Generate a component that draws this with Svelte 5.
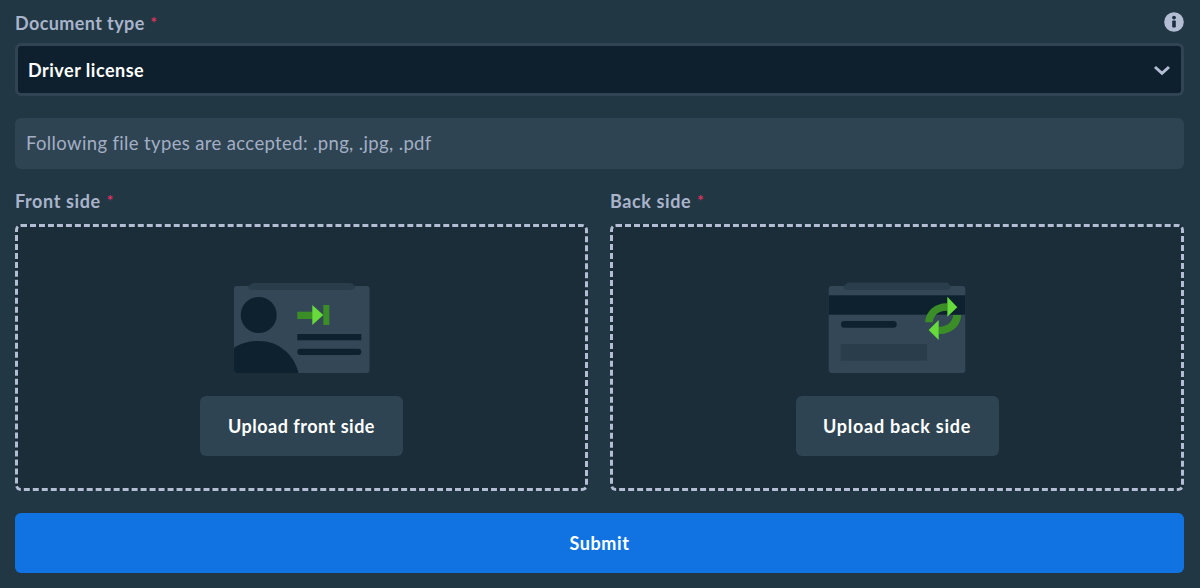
<script>
  const sides = [
    { label: 'Front side', action: 'Upload front side', kind: 'front' },
    { label: 'Back side', action: 'Upload back side', kind: 'back' }
  ];
</script>

<div class="page">
  <div class="label-row">
    <span class="label">Document type <span class="req">*</span></span>
    <svg class="info" width="20" height="20" viewBox="0 0 20 20" aria-hidden="true">
      <circle cx="10" cy="10" r="9.8" fill="#b3bdd3" />
      <circle cx="10" cy="5.6" r="1.9" fill="#1c2f3e" />
      <rect x="8.2" y="8.6" width="3.6" height="7" rx="0.8" fill="#1c2f3e" />
    </svg>
  </div>

  <div class="select">
    <span>Driver license</span>
    <svg width="18" height="12" viewBox="0 0 18 12" aria-hidden="true">
      <path d="M2 3 L9 9.3 L16 3" fill="none" stroke="#b3bdd3" stroke-width="3" />
    </svg>
  </div>

  <div class="note">Following file types are accepted: .png, .jpg, .pdf</div>

  <div class="sides">
    {#each sides as s}
      <div class="side">
        <span class="label side-label">{s.label} <span class="req">*</span></span>
        <div class="drop">
          {#if s.kind === 'front'}
            <svg class="card" width="139" height="94" viewBox="232 281 139 94" aria-hidden="true">
              <path d="M234 289 Q234 286 237 286 H366.5 Q369.5 286 369.5 289 V370 Q369.5 373 366.5 373 H237 Q234 373 234 370 Z" fill="#334756" />
              <path d="M248 288 Q250 283 255 283 H349 Q354 283 355 288 Q353 290 350 290 H253 Q250 290 248 288 Z" fill="#2a3d4b" />
              <circle cx="258.7" cy="315" r="18" fill="#0e212e" />
              <path d="M234 348 C241 343 250 341 258.7 341 C278 341 294 354 298.5 373 H237 Q234 373 234 370 Z" fill="#0e212e" />
              <rect x="297.3" y="311.7" width="15.5" height="7.3" fill="#3b8e27" />
              <path d="M312.3 305 L323.3 315 L312.3 325 Z" fill="#67db3b" />
              <rect x="323.3" y="305" width="6" height="20" fill="#3b8e27" />
              <rect x="297.3" y="334" width="64" height="6.3" fill="#0e212e" />
              <rect x="297.3" y="348.7" width="64" height="6.3" rx="3" fill="#0e212e" />
            </svg>
          {:else}
            <svg class="card" width="139" height="94" viewBox="828 281 139 94" aria-hidden="true">
              <path d="M828.7 289 Q828.7 286 831.7 286 H962.3 Q965.3 286 965.3 289 V370 Q965.3 373 962.3 373 H831.7 Q828.7 373 828.7 370 Z" fill="#334756" />
              <path d="M843.3 288 Q845 282.5 850 282.5 H945 Q950 282.5 950.7 288 Q949 290 946 290 H848 Q845 290 843.3 288 Z" fill="#2a3d4b" />
              <rect x="828.7" y="295.3" width="136.6" height="19.4" fill="#0e212e" />
              <rect x="841" y="321" width="55.7" height="6.7" rx="3.3" fill="#0e212e" />
              <rect x="840.7" y="344" width="86.3" height="16.7" fill="#2a3d4b" />
              <path d="M925 322.3 C926 311 935 303 947.3 303.3 V310.7 C939 310.5 933.5 315 932.7 322.3 Z" fill="#3b8e27" />
              <path d="M961 315 C961 326 951 334.5 938.7 334 V326.7 C947 327 952.5 322 953.3 315 Z" fill="#3b8e27" />
              <path d="M947.3 296.7 L957.3 307.3 L947.3 316.7 Z" fill="#67db3b" />
              <path d="M938.7 320 L928.7 330 L938.7 340 Z" fill="#67db3b" />
            </svg>
          {/if}
          <button type="button" class="upload {s.kind}">{s.action}</button>
        </div>
      </div>
    {/each}
  </div>

  <button type="button" class="submit">Submit</button>
</div>

<style>
  :global(body) {
    margin: 0;
    background: #213744;
  }
  .page {
    width: 1200px;
    height: 588px;
    box-sizing: border-box;
    padding: 10px 16px 0 15px;
    background: #213744;
    font-family: Lato, "Liberation Sans", sans-serif;
    overflow: hidden;
  }
  .label-row {
    display: flex;
    justify-content: space-between;
    align-items: center;
    height: 24px;
    margin-bottom: 9px;
  }
  .label {
    color: #a9b4cb;
    font-size: 18px;
    font-weight: 700;
    letter-spacing: 0.4px;
    line-height: 24px;
  }
  .req {
    color: #e0315f;
    font-size: 15px;
    vertical-align: 2px;
    margin-left: 1px;
  }
  .select {
    height: 53px;
    box-sizing: border-box;
    border: 3px solid #314453;
    border-radius: 6px;
    background: #0e202d;
    color: #fff;
    font-size: 18px;
    font-weight: 700;
    letter-spacing: 0.5px;
    display: flex;
    align-items: center;
    justify-content: space-between;
    padding: 0 10px 0 10px;
  }
  .note {
    margin-top: 22px;
    height: 51px;
    box-sizing: border-box;
    border-radius: 6px;
    background: #2e4452;
    color: #a3aec4;
    font-size: 18.5px;
    letter-spacing: 0.36px;
    line-height: 51px;
    padding-left: 11px;
  }
  .sides {
    display: grid;
    grid-template-columns: 573px 574px;
    column-gap: 22px;
    margin-top: 19px;
  }
  .side-label {
    display: block;
    height: 24px;
    margin-bottom: 12px;
    letter-spacing: 0.6px;
  }
  .drop {
    height: 267px;
    box-sizing: border-box;
    border: 3px dashed #b3bdd3;
    border-radius: 6px;
    background: #1b2d39;
    display: flex;
    flex-direction: column;
    align-items: center;
    padding-top: 54px;
  }
  .card {
    display: block;
    margin-bottom: 21px;
  }
  .upload {
    width: 203px;
    height: 60px;
    flex: none;
    border: 0;
    border-radius: 6px;
    background: #2e4452;
    color: #fff;
    font-family: inherit;
    font-size: 18px;
    font-weight: 700;
    letter-spacing: 0.5px;
  }
  .upload.back {
    letter-spacing: 0.75px;
  }
  .submit {
    display: block;
    width: 100%;
    height: 60px;
    margin-top: 22px;
    border: 0;
    border-radius: 6px;
    background: #1173e2;
    color: #fff;
    font-family: inherit;
    font-size: 18px;
    font-weight: 700;
    letter-spacing: 0.6px;
  }
</style>
